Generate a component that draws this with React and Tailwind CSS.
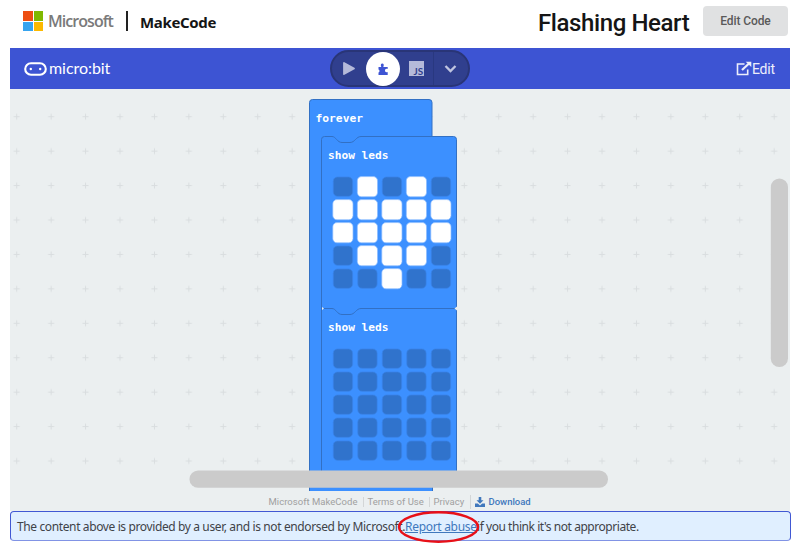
import React from "react";

const ROWS = [
  [0, 1, 0, 1, 0],
  [1, 1, 1, 1, 1],
  [1, 1, 1, 1, 1],
  [0, 1, 1, 1, 0],
  [0, 0, 1, 0, 0],
];
const BLANK = ROWS.map((r) => r.map(() => 0));

function Leds({ rows, y }) {
  return rows.map((row, r) =>
    row.map((on, c) => (
      <rect
        key={`${r}-${c}`}
        x={(on ? 322.8 : 323.3) + c * 24.5}
        y={(on ? y - 0.4 : y) + r * 23}
        width={on ? 20.2 : 19.3}
        height={on ? 20.2 : 19.3}
        rx="4.2"
        fill={on ? "#fff" : "#3073cc"}
        stroke={on ? "#8bbcff" : "#3982e6"}
        strokeWidth="0.7"
      />
    ))
  );
}

function Workspace() {
  return (
    <svg className="block h-[402px] w-[780px] shrink-0" viewBox="0 0 780 402">
      <defs>
        <pattern id="grid" x="-10.5" y="10.5" width="34.43" height="34.43" patternUnits="userSpaceOnUse">
          <path d="M14.2 17.2h6M17.2 14.2v6" stroke="#d9dddf" strokeWidth="1" />
        </pattern>
      </defs>
      <rect width="780" height="402" fill="#ebeff0" />
      <rect width="780" height="402" fill="url(#grid)" />
      <path d="M299.5 402V13.5q0-3 3-3h116.500q3 0 3 3V402z" fill="#3c90ff" />
      <path d="M299.5 402V13.5q0-3 3-3h116.500q3 0 3 3V47.5M422.5 392V402" fill="none" stroke="#3270c4" />
      <path
        d="M311.500 392V50.500q0-3 3-3h7.500c4 0 5 6 10 6h8c5 0 6-6 11-6h92.500q3 0 3 3V392"
        fill="#3c90ff"
        stroke="#3270c4"
      />
      <path d="M312 219.500h10c4 0 5 6 10 6h8c5 0 6-6 11-6h95" fill="none" stroke="#3270c4" />
      <path d="M312 218l2 1.500-2 1.500zM447 217.500l-2.500 2 2.500 2z" fill="#ebeff0" />
      <g fill="#fff" fontFamily="'DejaVu Sans Mono', monospace" fontWeight="bold" fontSize="11.2">
        <text x="305.5" y="33" textLength="47.5" lengthAdjust="spacingAndGlyphs">forever</text>
        <text x="318" y="70" textLength="60.5" lengthAdjust="spacingAndGlyphs">show leds</text>
        <text x="318" y="242" textLength="60.5" lengthAdjust="spacingAndGlyphs">show leds</text>
      </g>
      <Leds rows={ROWS} y={88} />
      <Leds rows={BLANK} y={260} />
      <rect x="179.5" y="381.5" width="418.5" height="17.3" rx="8.6" fill="#cbcbcb" />
      <rect x="760.8" y="89.5" width="17.2" height="188.5" rx="8.6" fill="#cbcbcb" />
    </svg>
  );
}

function TopBar() {
  return (
    <div className="flex h-12 items-start pl-[23px] pr-3">
      <div className="mt-[11px] grid h-5 w-5 shrink-0 grid-cols-2 gap-px">
        <span className="bg-[#ed4e12]" />
        <span className="bg-[#80b900]" />
        <span className="bg-[#37a4ef]" />
        <span className="bg-[#fcb900]" />
      </div>
      <span className="ml-[5px] mt-[9px] w-[78px] whitespace-nowrap font-['Open_Sans',sans-serif] text-[16px] font-semibold leading-6 tracking-[-0.95px] text-[#7a7a7a]">Microsoft</span>
      <span className="mt-[11px] h-5 w-[2px] bg-[#222]" />
      <span className="ml-[12px] mt-[10px] whitespace-nowrap font-['Noto_Sans',sans-serif] text-[15px] font-bold leading-6 tracking-[-0.35px] text-[#151515]">MakeCode</span>
      <h1 className="ml-auto mt-[7px] w-[165px] whitespace-nowrap font-[Roboto,sans-serif] text-[24px] font-medium leading-8 tracking-[-0.4px] text-[#151515]">Flashing Heart</h1>
      <button className="mt-[6px] h-[30px] w-[85px] shrink-0 rounded-[4px] bg-[#e0e1e2] font-[Roboto,sans-serif] text-[12px] font-medium tracking-[-0.1px] text-[#5a5a5a]">Edit Code</button>
    </div>
  );
}

function Header() {
  return (
    <div className="flex h-[41px] items-center bg-[#3d54d3] text-white">
      <div className="flex w-[320px] items-center pl-[14px]">
        <svg className="h-[14px] w-[23px]" viewBox="0 0 23 14" fill="none">
          <rect x="1.2" y="1.2" width="20.6" height="11.6" rx="5.8" stroke="#fff" strokeWidth="2.1" />
          <circle cx="6.8" cy="7" r="1.2" fill="#fff" />
          <circle cx="16.2" cy="7" r="1.2" fill="#fff" />
        </svg>
        <span className="-mt-[2px] ml-[2px] font-['Lato',sans-serif] text-[16px] leading-5 tracking-[-0.05px]">micro:bit</span>
      </div>
      <div className="flex h-[37px] w-[140px] items-center rounded-full border-2 border-[#293577] bg-[#303f8e]">
        <div className="flex w-[34px] justify-center">
          <svg className="h-[15px] w-[14px]" viewBox="0 0 14 15"><path d="M2 2L12 7.500L2 13z" fill="#b5bada" stroke="#b5bada" strokeWidth="1.800" strokeLinejoin="round" /></svg>
        </div>
        <div className="flex h-[34px] w-[34px] shrink-0 items-center justify-center rounded-full bg-white">
          <svg className="h-[14px] w-[14px]" viewBox="0 0 14 14">
            <path d="M2.500 5h2.800C4.300 3 4.900 1.500 6.300 1.500S8.300 3 7.300 5H11.700V7.100C10 6.400 9 7.300 9 8.500s1 2.100 2.700 1.400V13H2.500V10.400q1-.3 1-1.500t-1-1.400z" fill="#3d54d3" />
          </svg>
        </div>
        <div className="flex h-full w-[34px] items-center justify-center border-r border-[#293880]">
          <svg className="h-[15px] w-[15px]" viewBox="0 0 14 14">
            <rect width="14" height="14" fill="#b5bada" />
            <text x="4.300" y="12.700" textLength="9" lengthAdjust="spacingAndGlyphs" fontFamily="Lato, sans-serif" fontWeight="bold" fontSize="8.800" fill="#303f8e">JS</text>
          </svg>
        </div>
        <div className="flex w-[32px] justify-center">
          <svg className="h-[9px] w-[13px]" viewBox="0 0 13 9" fill="none"><path d="M1.500 2L6.500 7L11.500 2" stroke="#c0c5e0" strokeWidth="2.300" /></svg>
        </div>
      </div>
      <div className="ml-auto flex items-center pr-[15px] text-[#eceefb]">
        <svg className="h-[15px] w-[16px]" viewBox="0 0 16 15" fill="none">
          <path d="M8.500 3H1.500V13.500H11.700V8.500" stroke="currentColor" strokeWidth="1.600" />
          <path d="M6 9L13 2.500" stroke="currentColor" strokeWidth="2.200" />
          <path d="M9.700 .7H15.300V6z" fill="currentColor" />
        </svg>
        <span className="font-[Roboto,sans-serif] text-[14px] leading-5 tracking-[-0.15px]">Edit</span>
      </div>
    </div>
  );
}

function Footer() {
  return (
    <div className="flex h-5 items-center bg-[#ebeff0] pl-[258.500px] pt-[2px] font-[Roboto,sans-serif] text-[9.500px] text-[#a0a0a0]">
      <span className="w-[94px] whitespace-nowrap tracking-[0.03px]">Microsoft MakeCode</span>
      <span className="w-[66px] whitespace-nowrap border-l border-[#d3d6d7] pl-[4px] leading-[10px]">Terms of Use</span>
      <span className="w-[41px] whitespace-nowrap border-l border-[#d3d6d7] pl-[4px] leading-[10px]">Privacy</span>
      <span className="flex items-center border-l border-[#d3d6d7] pl-[4px] font-medium text-[#4078bd]">
        <svg className="mr-[4px] h-[10px] w-[10px]" viewBox="0 0 10 10" fill="currentColor">
          <path d="M3.700 0h2.600v3.200h2.200L5 6.800 1.500 3.200h2.200z" />
          <path d="M0 6.600h2.800L5 8.600l2.200-2H10V10H0z" />
        </svg>
        Download
      </span>
    </div>
  );
}

function Notice() {
  return (
    <div className="flex h-[30px] w-[781px] items-center whitespace-nowrap rounded-[4px] border border-[#4158d3] border-b-[#8193e5] bg-[#e0efff] pl-[6px] pt-[2px] font-['Noto_Sans',sans-serif] text-[12px] text-[#404348]">
      <span className="w-[388px] tracking-[-0.38px]">The content above is provided by a user, and is not endorsed by Microsoft.</span>
      <span className="relative w-[69px] tracking-[-0.3px]">
        <a className="text-[#4078bd] underline">Report abuse</a>
        <svg className="absolute -left-[8px] -top-[7px] h-[32px] w-[83px]" viewBox="0 0 83 32">
          <ellipse cx="41.500" cy="16" rx="39.500" ry="14.700" fill="none" stroke="#e81018" strokeWidth="2.500" />
        </svg>
      </span>
      <span className="ml-[3px] tracking-[-0.45px]">if you think it's not appropriate.</span>
    </div>
  );
}

export default function App() {
  return (
    <div className="h-[548px] w-[800px] overflow-hidden bg-white">
      <TopBar />
      <div className="ml-[10px] w-[780px]">
        <Header />
        <Workspace />
        <Footer />
        <Notice />
      </div>
    </div>
  );
}
